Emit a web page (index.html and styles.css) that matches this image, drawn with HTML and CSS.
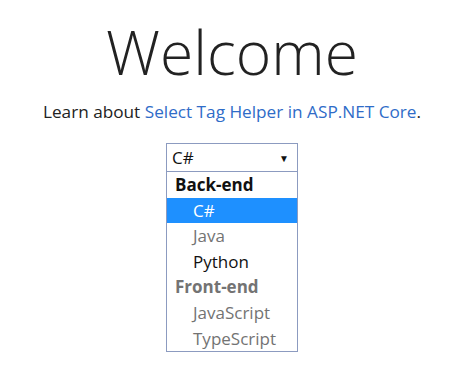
FILE: index.html
```html
<!DOCTYPE html>
<html lang="en">
<head>
<meta charset="UTF-8">
<meta name="viewport" content="width=device-width, initial-scale=1.0">
<title>Home Page</title>
<link rel="stylesheet" href="styles.css">
</head>
<body>

<div class="container">
  <h1 class="title">Welcome</h1>
  <p class="lead">Learn about <a href="#">Select Tag Helper in ASP.NET Core</a>.</p>

  <div class="picker">
    <div class="picker-box">
      <span>C#</span>
      <span class="arrow">&#9660;</span>
    </div>
    <ul class="picker-list">
      <li class="group">Back-end</li>
      <li class="option selected">C#</li>
      <li class="option muted">Java</li>
      <li class="option">Python</li>
      <li class="group muted">Front-end</li>
      <li class="option muted">JavaScript</li>
      <li class="option muted">TypeScript</li>
    </ul>
  </div>
</div>

</body>
</html>
```

FILE: styles.css
```css
body {
  margin: 0;
  font-family: "Open Sans", "Noto Sans", sans-serif;
  color: #222;
  background-color: #fff;
}
.container {
  width: 464px;
  text-align: center;
}
.title {
  margin: 14px 0 0;
  font-size: 60.5px;
  font-weight: 300;
  line-height: 76px;
  color: #222;
}
.lead {
  margin: 10px 0 0;
  font-size: 17.2px;
  line-height: 24px;
}
.lead a {
  color: #2f6cc8;
  text-decoration: none;
}
.picker {
  width: 132px;
  margin: 19px auto 0;
  text-align: left;
  font-size: 17px;
}
.picker-box {
  display: flex;
  justify-content: space-between;
  align-items: center;
  height: 27px;
  padding: 0 8px 0 5px;
  border: 1px solid #8c9bc0;
  color: #111;
}
.arrow {
  font-size: 10px;
}
.picker-list {
  list-style: none;
  margin: 0;
  padding: 0;
  border: 1px solid #8c9bc0;
  border-top: none;
}
.picker-list li {
  height: 25.6px;
  line-height: 25.6px;
}
.group {
  padding-left: 8px;
  font-weight: bold;
  color: #111;
}
.option {
  padding-left: 26px;
  color: #111;
}
.selected {
  background-color: #1e90ff;
  color: #fff;
}
.muted {
  color: #737373;
}
```
